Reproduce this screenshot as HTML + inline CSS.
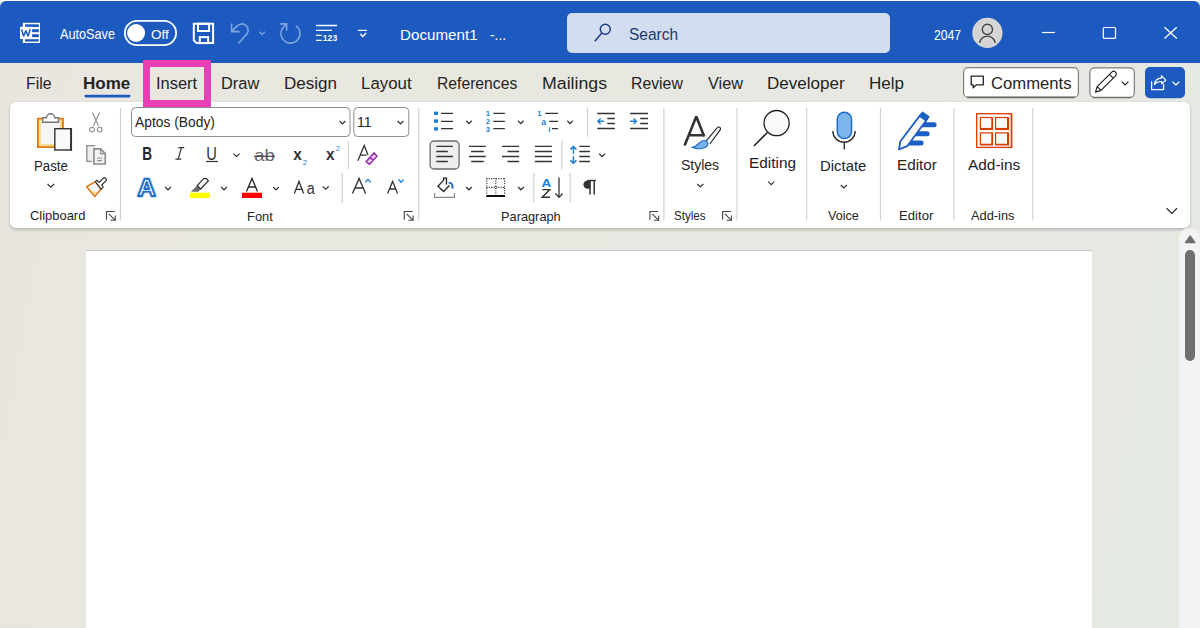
<!DOCTYPE html>
<html><head><meta charset="utf-8"><style>
html,body{margin:0;padding:0;}
body{width:1200px;height:628px;overflow:hidden;position:relative;background:#f5f3ed;font-family:"Liberation Sans",sans-serif;}
.abs{position:absolute;}
#topline{left:0;top:0;width:1200px;height:1px;background:#fbf8f0;}
#title{left:0;top:1px;width:1200px;height:62px;background:#1c5abf;border-radius:6px 6px 0 0;}
#tabsbg{left:0;top:62px;width:1200px;height:566px;background:linear-gradient(100deg,#e8e6df 0%,#e7e8e1 60%,#e4e9e2 100%);}
#ribbon{left:10px;top:102px;width:1180px;height:126px;background:#fff;border-radius:6px;box-shadow:0 1.5px 3px rgba(0,0,0,0.2);}
#page{left:86px;top:250px;width:1006px;height:400px;background:#fff;border-top:1px solid #c8c8c8;box-sizing:border-box;}
#sbtrack{left:1179px;top:228px;width:21px;height:400px;background:#f3f3f3;border-radius:10px 10px 0 0;}
#sbthumb{left:1185px;top:250px;width:10px;height:111px;background:#707070;border-radius:5px;}
#search{left:567px;top:13px;width:323px;height:40px;background:#d2ddef;border-radius:5px;}
#pink{left:143px;top:60px;width:68px;height:47px;box-sizing:border-box;border:7px solid #e93fb5;}
.sep{position:absolute;width:1px;background:#d4d4d4;}

.t{position:absolute;white-space:pre;font-family:"Liberation Sans", sans-serif;transform-origin:0 0;}
</style></head><body>
<div id="topline" class="abs"></div>
<div id="tabsbg" class="abs"></div>
<div id="title" class="abs"></div>
<div id="search" class="abs"></div>
<div id="ribbon" class="abs"></div>
<div id="page" class="abs"></div>
<div id="sbtrack" class="abs"></div>
<div id="sbthumb" class="abs"></div>
<svg class="abs" style="left:0;top:0" width="1200" height="628" viewBox="0 0 1200 628" fill="none" stroke-linecap="butt">
<!-- ===== TITLE BAR ===== -->
<g id="wordicon">
 <rect x="22.8" y="22.8" width="17.2" height="20.2" fill="#fff"/>
 <rect x="25" y="24.3" width="13.8" height="2.7" fill="#1c5abf"/>
 <rect x="25" y="29.2" width="13.8" height="3" fill="#1c5abf"/>
 <rect x="25" y="34.2" width="13.8" height="3" fill="#1c5abf"/>
 <rect x="25" y="39.2" width="13.8" height="2.4" fill="#1c5abf"/>
 <rect x="20" y="26.8" width="12.1" height="12.2" fill="#fff"/>
 <path d="M21.5 29.2 L23.6 36.4 L25.9 30.6 L28.1 36.4 L30.2 29.2" stroke="#1c5abf" stroke-width="1.5" stroke-linejoin="bevel"/>
</g>
<rect x="124.9" y="20.9" width="51.2" height="24.2" rx="12.1" stroke="#fff" stroke-width="1.8"/>
<circle cx="136.1" cy="33" r="9" fill="#fff"/>
<g stroke="#fff" stroke-width="2">
 <path d="M193.8 23.8 H213.1 V43.1 H196.6 L193.8 40.3 Z"/>
 <rect x="198" y="23.8" width="11.1" height="7.2"/>
 <rect x="199.8" y="37.1" width="8.3" height="6"/>
</g>
<g stroke="#80a5de" stroke-width="1.6">
 <path d="M231.6 23.4 V31.6 H239.7 M231.8 31.4 L237.2 25.9 A6.3 6.3 0 0 1 246.9 33.9 L238.3 43.5"/>
 <path d="M259.4 31.7 L262.1 34.5 L264.8 31.7" stroke-width="1.3"/>
 <path d="M280.2 23.9 H286.6 V30.7 M286.6 23.9 L282.6 28 A9.6 9.6 0 1 0 295.8 25.6"/>
</g>
<g stroke="#fff" stroke-width="1.3">
 <path d="M316 25.5 H337 M316 30.4 H332 M316 35.4 H321.8 M316 40.3 H321.8"/>
 <path d="M358 30.4 H367" stroke-width="1.2"/>
 <path d="M360.4 34 L362.7 36.4 L366.2 33" stroke-width="1.4"/>
</g>
<text x="322.8" y="41" font-family="Liberation Sans" font-size="9.4" font-weight="bold" fill="#fff" textLength="14.4" lengthAdjust="spacingAndGlyphs">123</text>
<g stroke="#1d3f87" stroke-width="1.5">
 <circle cx="605.3" cy="29.3" r="5"/>
 <path d="M601.7 33 L594.9 41.3"/>
</g>
<circle cx="987.4" cy="32.9" r="15.1" fill="#d5d5d5"/>
<g stroke="#454545" stroke-width="1.4">
 <circle cx="987.4" cy="29.4" r="5.1"/>
 <path d="M979.6 42.8 A7.9 7.9 0 0 1 995.2 42.8"/>
</g>
<g stroke="#fff" stroke-width="1.2">
 <path d="M1042 32.5 H1055"/>
 <rect x="1103.3" y="27.5" width="12.2" height="10.9" rx="1"/>
 <path d="M1164.5 27.3 L1176.8 38.6 M1176.8 27.3 L1164.5 38.6" stroke-width="1.3"/>
</g>
<!-- ===== TABS ===== -->
<rect x="84.5" y="94.8" width="46" height="2.6" rx="1.3" fill="#1b5abf"/>
<rect x="963.6" y="67.6" width="114.8" height="29.6" rx="4.5" fill="#fff" stroke="#7e7e7e" stroke-width="1.2"/>
<path d="M967 97.5 H1075" stroke="#6e6e6e" stroke-width="1.3"/>
<path d="M971.2 76.2 H983.3 V84.8 H976.5 L973.2 87.9 V84.8 H971.2 Z" stroke="#222" stroke-width="1.3" stroke-linejoin="round"/>
<rect x="1089.9" y="67.9" width="44.4" height="29.4" rx="4.5" fill="#fff" stroke="#7e7e7e" stroke-width="1.2"/>
<path d="M1093 97.7 H1131" stroke="#6e6e6e" stroke-width="1.3"/>
<g stroke="#222" stroke-width="1.2" stroke-linejoin="round">
 <path d="M1095.5 92.1 L1097.2 86.6 L1111.8 72.1 A2.6 2.6 0 0 1 1115.5 75.8 L1101 90.4 Z M1097.2 86.6 L1101 90.4 M1109.5 74.4 L1113.2 78.1"/>
 <path d="M1121.8 81.6 L1125.1 84.9 L1128.4 81.6" stroke-width="1.3"/>
</g>
<rect x="1145" y="67" width="40" height="31.2" rx="5" fill="#1c5abf"/>
<g stroke="#fff" stroke-width="1.3" stroke-linejoin="round">
 <path d="M1151.6 81.2 V89.6 H1163.6 V84.1"/>
 <path d="M1154.3 84.6 C1154.8 80.6 1157.6 78.3 1161.4 78.1 V75.7 L1165.8 80.2 L1161.6 83.7 V81.5 C1158.6 81.3 1156.2 82.4 1154.3 84.6 Z" stroke-width="1.15"/>
 <path d="M1172.4 81.6 L1175.9 85 L1179.4 81.6"/>
</g>
<!-- ===== RIBBON ===== -->
<g stroke="#cfcfcf" stroke-width="1.1">
 <path d="M120.5 108 V220.5 M418.7 108 V220.5 M663.9 108 V220.5 M737 108 V220.5 M806.7 108 V220.5 M880.4 108 V220.5 M953.9 108 V220.5 M1032.8 108 V220.5"/>
 <path d="M348.5 141 V169.5 M342.3 173 V203 M587.5 107.3 V136.7 M561.8 140.4 V169.7 M533.8 173 V202.2 M570.2 173 V202.2" stroke="#d0d0d0" stroke-width="1.2"/>
</g>
<!-- Paste -->
<rect x="37" y="117.8" width="26.8" height="30.1" fill="#e37200"/>
<rect x="38.7" y="119.4" width="23.4" height="26.9" fill="#f8d98e"/>
<rect x="40.8" y="121.5" width="19.2" height="22.6" fill="#f5f5f5"/>
<path d="M42.7 122.2 V117.8 H46.6 A4 4 0 0 1 54.6 117.8 H58.5 V122.2 Z" fill="#fff" stroke="#777" stroke-width="1.4"/>
<rect x="54.8" y="128.7" width="16.4" height="21.3" fill="#f9f9f9" stroke="#333" stroke-width="1.4"/>
<path d="M71.1 128 V150.7" stroke="#333" stroke-width="1.9"/>
<path d="M47.5 184 L50.8 187.2 L54.1 184" stroke="#333" stroke-width="1.2"/>
<!-- cut / copy / painter -->
<g stroke="#8c8c8c" stroke-width="1.1">
 <path d="M92.4 112.4 L98.6 126 M99.6 112.4 L93.3 126"/>
 <circle cx="92.1" cy="129.6" r="2.4"/>
 <circle cx="99.7" cy="129.6" r="2.4"/>
</g>
<g stroke="#8a8a8a" stroke-width="1.3">
 <path d="M94.8 145.7 H86.8 V161.4 H91.8" fill="#efefef"/>
 <path d="M93.9 148.9 H100.6 L105.3 153.6 V164 H93.9 Z" fill="#f1f1f1" stroke-width="1.6"/>
 <path d="M100.6 148.9 V153.6 H105.3 M97.2 158 H101.8 M97.2 160.6 H101.8" stroke-width="1.1"/>
</g>
<path d="M95.4 181.6 L86.7 186.7 L94.6 196.4 L101 189.2 Z" fill="#f6f6f6" stroke="#e37200" stroke-width="1.5" stroke-linejoin="round"/>
<path d="M90.6 190.3 L97.2 192.6 L94.7 195.3 Z" fill="#f8d98e"/>
<path d="M95.4 181.6 L96.9 180.1 L99.1 182.4 L103.3 178.3 A1.8 1.8 0 0 1 105.9 180.9 L101.8 185 L103.2 187.1 L101 189.2 Z" fill="#fff" stroke="#333" stroke-width="1.2" stroke-linejoin="round"/>
<!-- launchers -->
<g stroke="#444" stroke-width="1.1">
 <path d="M106.5 219.8 V211.5 H114.8 M108.8 213.8 L115.3 220.3 M115.3 215.5 V220.3 H110.5"/>
 <path d="M404.3 219.8 V211.5 H412.6 M406.6 213.8 L413.1 220.3 M413.1 215.5 V220.3 H408.3"/>
 <path d="M649.9 219.8 V211.5 H658.2 M652.2 213.8 L658.7 220.3 M658.7 215.5 V220.3 H653.9"/>
 <path d="M722.6 219.8 V211.5 H730.9 M724.9 213.8 L731.4 220.3 M731.4 215.5 V220.3 H726.6"/>
</g>
<!-- Font group -->
<rect x="131.5" y="107.5" width="218.5" height="29" rx="4" fill="#fff" stroke="#8c8c8c" stroke-width="1"/>
<rect x="353.8" y="107.5" width="55" height="29" rx="4" fill="#fff" stroke="#8c8c8c" stroke-width="1"/>
<g stroke="#333" stroke-width="1.2">
 <path d="M339.6 121 L342.5 123.9 L345.4 121 M397.6 121 L400.5 123.9 L403.4 121"/>
 <path d="M233.3 153.6 L236.5 156.4 L239.7 153.6 M165.2 187 L168 189.8 L170.8 187 M221.2 187 L224 189.8 L226.8 187 M273.2 187 L276 189.8 L278.8 187 M322.6 186.4 L325.7 189.2 L328.8 186.4"/>
</g>
<text x="142.2" y="159.7" font-family="Liberation Sans" font-weight="bold" font-size="17.6" fill="#262626" textLength="9.8" lengthAdjust="spacingAndGlyphs">B</text>
<path d="M178.3 147.6 H184.2 M175.4 159.2 H181.3 M181.4 147.6 L178.2 159.2" stroke="#333" stroke-width="1.2"/>
<text x="206.2" y="159.7" font-family="Liberation Sans" font-size="17.6" fill="#333" textLength="10.6" lengthAdjust="spacingAndGlyphs">U</text>
<rect x="206" y="160.9" width="12" height="1.2" fill="#333"/>
<text x="254.2" y="161" font-family="Liberation Sans" font-size="17" fill="#666" textLength="20.6" lengthAdjust="spacingAndGlyphs">ab</text>
<path d="M253.9 156.3 H274.9" stroke="#444" stroke-width="1.2"/>
<text x="293.2" y="159.8" font-family="Liberation Sans" font-weight="bold" font-size="16.5" fill="#333" textLength="8.6" lengthAdjust="spacingAndGlyphs">x</text>
<text x="302.8" y="164.5" font-family="Liberation Sans" font-size="8" fill="#1a7fd4" textLength="4.3" lengthAdjust="spacingAndGlyphs">2</text>
<text x="325.9" y="159.8" font-family="Liberation Sans" font-weight="bold" font-size="16.5" fill="#333" textLength="8.6" lengthAdjust="spacingAndGlyphs">x</text>
<text x="336" y="151.1" font-family="Liberation Sans" font-size="8" fill="#1a7fd4" textLength="4" lengthAdjust="spacingAndGlyphs">2</text>
<path d="M357.9 160.8 L364.2 145.5 L368 155 M360.1 155.2 H366.5" stroke="#333" stroke-width="1.3"/>
<path d="M366.2 161.6 L374.1 152.9 L377 156.3 L369.4 164.3 Z M370.2 157.3 L373.3 160.5" stroke="#9b2fae" stroke-width="1.6" stroke-linejoin="round" fill="#efdcf3"/>
<!-- row 3 font -->
<text x="137.4" y="195.5" font-family="Liberation Sans" font-weight="bold" font-size="24" fill="#fff" stroke="#b3d5f5" stroke-width="3.4" stroke-linejoin="round" textLength="18.2" lengthAdjust="spacingAndGlyphs">A</text>
<text x="137.4" y="195.5" font-family="Liberation Sans" font-weight="bold" font-size="24" fill="#fff" stroke="#1f6fc5" stroke-width="1.8" stroke-linejoin="round" textLength="18.2" lengthAdjust="spacingAndGlyphs">A</text>
<path d="M197.2 185.6 L191.6 191.4 L198.2 191.4 L200.6 189 Z" fill="#6e6e6e" stroke="#6e6e6e" stroke-width="0.6" stroke-linejoin="round"/>
<path d="M197.2 185.6 L203.6 178.6 L206.6 178.6 L208.4 180.8 L200.6 189 Z" fill="#fafafa" stroke="#333" stroke-width="1.25" stroke-linejoin="round"/>
<rect x="190" y="192.7" width="20" height="5.3" fill="#ffff00"/>
<path d="M246.5 191.6 L252 178.4 L257.5 191.6 M248.3 187 H255.7" stroke="#262626" stroke-width="1.3"/>
<rect x="242" y="192.7" width="20" height="5.3" fill="#ff0000"/>
<path d="M294.4 193.6 L299 181.4 L303.6 193.6 M296 189.3 H302" stroke="#333" stroke-width="1.3"/>
<text x="306.8" y="193.7" font-family="Liberation Sans" font-size="16" fill="#333" textLength="8" lengthAdjust="spacingAndGlyphs">a</text>
<path d="M352.5 193.6 L359.1 178.4 L365.6 193.6 M355 188 H363.2" stroke="#333" stroke-width="1.35"/>
<path d="M365.3 182.3 L368 179.4 L370.7 182.3" stroke="#1a7fd4" stroke-width="1.3"/>
<path d="M387.6 193.6 L392.6 181.4 L397.6 193.6 M389.5 189 H395.7" stroke="#333" stroke-width="1.3"/>
<path d="M398.5 179.5 L401 182.2 L403.5 179.5" stroke="#1a7fd4" stroke-width="1.3"/>
<!-- Paragraph -->
<g fill="#1a7fd4">
 <rect x="434" y="111.6" width="4" height="3.4"/>
 <rect x="434" y="119.4" width="4" height="3.4"/>
 <rect x="434" y="127.2" width="4" height="3.4"/>
</g>
<g stroke="#333" stroke-width="1.3">
 <path d="M441 113.3 H453 M441 121.3 H453 M441 128.7 H453"/>
 <path d="M493.3 113.3 H504.9 M493.3 121.3 H504.9 M493.3 128.7 H504.9"/>
 <path d="M545.3 113.3 H558 M549.3 121.3 H558 M552 128.7 H558"/>
 <path d="M466.2 120.8 L469 123.6 L471.8 120.8 M518 120.8 L520.8 123.6 L523.6 120.8 M567.3 120.8 L570 123.6 L572.7 120.8"/>
 <path d="M597.2 113.5 H614.8 M607.3 118.5 H614.8 M607.3 123.5 H614.8 M597.2 128.5 H614.8"/>
 <path d="M630.1 113.5 H648 M640.2 118.5 H648 M640.2 123.5 H648 M630.1 128.5 H648"/>
</g>
<g font-family="Liberation Sans" font-weight="bold" font-size="7.6" fill="#1a7fd4">
 <text x="485.8" y="116.3">1</text><text x="485.8" y="124.3">2</text><text x="485.8" y="132">3</text>
 <text x="537.2" y="116.3">1</text><text x="541.2" y="124.6" font-size="8.6">a</text><text x="548.2" y="132.2" font-size="8">i</text>
</g>
<g stroke="#1a7fd4" stroke-width="1.4">
 <path d="M597.8 121.3 H603.9 M600.6 118.5 L597.8 121.3 L600.6 124.1"/>
 <path d="M630 121.3 H636.4 M633.6 118.5 L636.4 121.3 L633.6 124.1"/>
</g>
<rect x="430.1" y="141" width="29" height="28" rx="4" fill="#eeeeee" stroke="#6b6b6b" stroke-width="1.3"/>
<g stroke="#333" stroke-width="1.3">
 <path d="M436.3 146.3 H452.9 M436.3 151.5 H447.8 M436.3 156.5 H452.9 M436.3 161.5 H447.8"/>
 <path d="M469 146.3 H485.8 M471.1 151.5 H483.8 M469 156.5 H485.8 M471.1 161.5 H483.8"/>
 <path d="M502 146.3 H519.1 M507.5 151.5 H519.1 M502 156.5 H519.1 M507.5 161.5 H519.1"/>
 <path d="M534.9 146.3 H551.9 M534.9 151.5 H551.9 M534.9 156.5 H551.9 M534.9 161.5 H551.9"/>
 <path d="M579.3 146.3 H589.9 M579.3 151.5 H589.9 M579.3 156.5 H589.9 M579.3 161.5 H589.9"/>
 <path d="M599.2 153.8 L602.1 156.7 L605 153.8"/>
 <path d="M466 187 L468.9 189.8 L471.8 187 M518 187 L520.9 189.8 L523.8 187"/>
</g>
<path d="M573.4 147 V153.8 M570.4 149.4 L573.4 146.6 L576.4 149.4 M573.4 156.3 V163 M570.4 160.4 L573.4 163.2 L576.4 160.4" stroke="#1a7fd4" stroke-width="1.5"/>
<!-- shading -->
<path d="M446.5 184.6 V178.1 H443.6 V180.1 L438 186.2 L443.6 191.5 L449.4 185.5" fill="#f8f8f8" stroke="#222" stroke-width="1.3" stroke-linejoin="miter"/>
<path d="M448.8 183 C451.6 182.4 453.2 185.2 452.4 188.6" stroke="#1a6dc8" stroke-width="1.9"/>
<path d="M434.6 193 V197.3 H454.4 V193" stroke="#888" stroke-width="1.2"/>
<!-- borders -->
<g stroke="#333" stroke-width="1.1" stroke-dasharray="1.1 1.3">
 <path d="M486.3 178.6 H505 M486.3 187.4 H505"/>
 <path d="M486.8 178.2 V194.6 M495.8 178.2 V194.6 M504.6 178.2 V194.6"/>
</g>
<circle cx="495.8" cy="187.4" r="1.2" stroke="#333" stroke-width="0.8" fill="#fff"/>
<rect x="486.2" y="195" width="18.8" height="2" fill="#111"/>
<!-- sort -->
<text x="541.6" y="186.6" font-family="Liberation Sans" font-weight="bold" font-size="11.2" fill="#1a7fd4" textLength="9.8" lengthAdjust="spacingAndGlyphs">A</text>
<path d="M542.2 189.6 H549.8 L542.2 197.3 H550" stroke="#333" stroke-width="1.4"/>
<path d="M559 177.6 V197.4 M555.4 193.5 L559 197.4 L562.6 193.5" stroke="#333" stroke-width="1.3"/>
<!-- pilcrow -->
<path d="M590.3 180.4 H587.6 A4.2 4.2 0 0 0 587.6 188.8 H590.3 Z" fill="#333"/><path d="M590 180.5 V194.6 M594.2 180.5 V194.6 M587.5 180.6 H595.8" stroke="#333" stroke-width="1.5"/>
<!-- Styles -->
<path d="M684.6 145.4 L696.3 116.6 L704.2 136.5 M688.7 135.3 H704.6" stroke="#333" stroke-width="2.6" stroke-linejoin="bevel"/>
<path d="M706 141.1 L717.5 127.4 A1.9 1.9 0 0 1 720.5 129.4 L709.9 144" fill="#f4f4f4" stroke="#222" stroke-width="1.1"/>
<path d="M692.4 147.4 C697 147 699.5 141 703.6 140.5 C706.6 140.3 708.5 142.5 707.6 145.2 C706 148.5 698 150 692.4 147.4 Z" fill="#7ab3ea" stroke="#1f6fc5" stroke-width="1.2"/>
<path d="M697.3 184 L700.3 187 L703.3 184 M768.2 181.6 L771.2 184.6 L774.2 181.6 M840.8 185 L843.8 188 L846.8 185" stroke="#333" stroke-width="1.2"/>
<!-- Editing -->
<circle cx="776.6" cy="123.1" r="12.6" fill="#f9f9f9" stroke="#222" stroke-width="1.3"/>
<path d="M767.4 132.5 L753.9 146" stroke="#222" stroke-width="1.6"/>
<!-- Dictate -->
<path d="M832.8 131 A11.2 11.2 0 0 0 855.2 131 M844.3 142.3 V149.5" stroke="#222" stroke-width="1.3"/>
<rect x="837.3" y="112.2" width="14.2" height="26.4" rx="7.1" fill="#7db5ec" stroke="#1a6dc8" stroke-width="1.5"/>
<!-- Editor -->
<g fill="#1b5ec6">
 <rect x="918" y="122.2" width="18.6" height="5" rx="2.5"/>
 <rect x="912" y="131.2" width="17.6" height="5.1" rx="2.5"/>
 <rect x="906" y="140.4" width="17.6" height="5.2" rx="2.5"/>
</g>
<path d="M899 149.4 L900.4 141.2 L920.8 114.4 L927.2 119 L907.2 146.2 Z" fill="#f8f8f8" stroke="#1b5ec6" stroke-width="1.8" stroke-linejoin="round"/>
<path d="M919.6 116.2 L922.6 112.2 L929 116.8 L926 120.8 Z" fill="#1b5ec6" stroke="#1b5ec6" stroke-width="1.2" stroke-linejoin="round"/>
<!-- Add-ins -->
<rect x="976.7" y="113.7" width="34.6" height="33.7" stroke="#d83b01" stroke-width="1.3"/>
<g stroke="#d83b01" stroke-width="1.2">
 <rect x="980.4" y="117.5" width="11.6" height="11"/>
 <rect x="995.6" y="117.5" width="12" height="11"/>
 <rect x="980.4" y="132.9" width="11.6" height="11.4"/>
 <rect x="995.6" y="132.9" width="12" height="11.4"/>
</g>
<g stroke="#d83b01" stroke-width="1.4">
 <path d="M992.4 117.2 V129.2 H980 M1008.4 117.2 V129.2 H995.2 M992.4 132.6 V144.9 H980 M1008.4 132.6 V144.9 H995.2"/>
 <path d="M1011.7 113.2 V148"/>
</g>
<path d="M1166.6 208.2 L1171.8 213.4 L1177 208.2" stroke="#333" stroke-width="1.3"/>
<!-- scrollbar arrow -->
<path d="M1185.4 242.6 L1190.2 235.8 L1195 242.6 Z" fill="#6e6e6e" stroke="#6e6e6e" stroke-width="1.2" stroke-linejoin="round"/>
</svg>
<div id="pink" class="abs"></div>

<span class="t" style="left:60.00px;top:27.59px;font-size:13.83px;line-height:13.83px;color:#ffffff;font-weight:400;transform:scaleX(0.9175);">AutoSave</span>
<span class="t" style="left:151.00px;top:27.66px;font-size:13.52px;line-height:13.52px;color:#ffffff;font-weight:400;transform:scaleX(0.9987);">Off</span>
<span class="t" style="left:399.73px;top:27.63px;font-size:14.14px;line-height:14.14px;color:#ffffff;font-weight:400;transform:scaleX(1.0746);">Document1</span>
<span class="t" style="left:489.70px;top:27.63px;font-size:14.14px;line-height:14.14px;color:#ffffff;font-weight:400;transform:scaleX(0.9709);">-...</span>
<span class="t" style="left:629.40px;top:25.95px;font-size:16.12px;line-height:16.12px;color:#1e3a6e;font-weight:400;transform:scaleX(0.9624);">Search</span>
<span class="t" style="left:933.70px;top:27.92px;font-size:14.04px;line-height:14.04px;color:#ffffff;font-weight:400;transform:scaleX(0.8691);">2047</span>
<span class="t" style="left:25.75px;top:76.21px;font-size:16.64px;line-height:16.64px;color:#242424;font-weight:400;transform:scaleX(0.9514);">File</span>
<span class="t" style="left:83.48px;top:76.21px;font-size:16.64px;line-height:16.64px;color:#242424;font-weight:700;transform:scaleX(1.0235);">Home</span>
<span class="t" style="left:155.51px;top:76.21px;font-size:16.64px;line-height:16.64px;color:#242424;font-weight:400;transform:scaleX(0.9888);">Insert</span>
<span class="t" style="left:220.71px;top:76.21px;font-size:16.64px;line-height:16.64px;color:#242424;font-weight:400;transform:scaleX(0.9874);">Draw</span>
<span class="t" style="left:283.98px;top:76.21px;font-size:16.64px;line-height:16.64px;color:#242424;font-weight:400;transform:scaleX(1.0237);">Design</span>
<span class="t" style="left:360.69px;top:76.21px;font-size:16.64px;line-height:16.64px;color:#242424;font-weight:400;transform:scaleX(1.0143);">Layout</span>
<span class="t" style="left:437.36px;top:76.21px;font-size:16.64px;line-height:16.64px;color:#242424;font-weight:400;transform:scaleX(0.9438);">References</span>
<span class="t" style="left:542.23px;top:76.21px;font-size:16.64px;line-height:16.64px;color:#242424;font-weight:400;transform:scaleX(1.0676);">Mailings</span>
<span class="t" style="left:631.05px;top:76.21px;font-size:16.64px;line-height:16.64px;color:#242424;font-weight:400;transform:scaleX(0.9504);">Review</span>
<span class="t" style="left:708.00px;top:76.21px;font-size:16.64px;line-height:16.64px;color:#242424;font-weight:400;transform:scaleX(0.9802);">View</span>
<span class="t" style="left:766.98px;top:76.21px;font-size:16.64px;line-height:16.64px;color:#242424;font-weight:400;transform:scaleX(1.0234);">Developer</span>
<span class="t" style="left:868.57px;top:76.21px;font-size:16.64px;line-height:16.64px;color:#242424;font-weight:400;transform:scaleX(1.0259);">Help</span>
<span class="t" style="left:990.60px;top:75.91px;font-size:16.64px;line-height:16.64px;color:#242424;font-weight:400;transform:scaleX(1.0017);">Comments</span>
<span class="t" style="left:33.64px;top:160.09px;font-size:13.83px;line-height:13.83px;color:#242424;font-weight:400;transform:scaleX(0.9576);">Paste</span>
<span class="t" style="left:29.90px;top:209.40px;font-size:13.0px;line-height:13.0px;color:#242424;font-weight:400;transform:scaleX(0.9943);">Clipboard</span>
<span class="t" style="left:134.60px;top:115.27px;font-size:14.56px;line-height:14.56px;color:#242424;font-weight:400;transform:scaleX(0.9503);">Aptos (Body)</span>
<span class="t" style="left:356.54px;top:115.27px;font-size:14.56px;line-height:14.56px;color:#242424;font-weight:400;transform:scaleX(0.9636);">11</span>
<span class="t" style="left:246.76px;top:209.60px;font-size:13.0px;line-height:13.0px;color:#242424;font-weight:400;transform:scaleX(0.9941);">Font</span>
<span class="t" style="left:500.62px;top:209.60px;font-size:13.0px;line-height:13.0px;color:#242424;font-weight:400;transform:scaleX(0.9835);">Paragraph</span>
<span class="t" style="left:681.40px;top:157.62px;font-size:14.04px;line-height:14.04px;color:#242424;font-weight:400;transform:scaleX(0.9976);">Styles</span>
<span class="t" style="left:748.51px;top:155.52px;font-size:14.04px;line-height:14.04px;color:#242424;font-weight:400;transform:scaleX(1.0949);">Editing</span>
<span class="t" style="left:819.84px;top:158.92px;font-size:14.04px;line-height:14.04px;color:#242424;font-weight:400;transform:scaleX(1.0614);">Dictate</span>
<span class="t" style="left:673.90px;top:209.30px;font-size:13.0px;line-height:13.0px;color:#242424;font-weight:400;transform:scaleX(0.8913);">Styles</span>
<span class="t" style="left:828.40px;top:209.30px;font-size:13.0px;line-height:13.0px;color:#242424;font-weight:400;transform:scaleX(0.9692);">Voice</span>
<span class="t" style="left:897.21px;top:157.92px;font-size:14.04px;line-height:14.04px;color:#242424;font-weight:400;transform:scaleX(1.0867);">Editor</span>
<span class="t" style="left:967.60px;top:157.92px;font-size:14.04px;line-height:14.04px;color:#242424;font-weight:400;transform:scaleX(1.0997);">Add-ins</span>
<span class="t" style="left:898.99px;top:209.30px;font-size:13.0px;line-height:13.0px;color:#242424;font-weight:400;transform:scaleX(1.0110);">Editor</span>
<span class="t" style="left:971.00px;top:209.30px;font-size:13.0px;line-height:13.0px;color:#242424;font-weight:400;transform:scaleX(0.9870);">Add-ins</span>
</body></html>
